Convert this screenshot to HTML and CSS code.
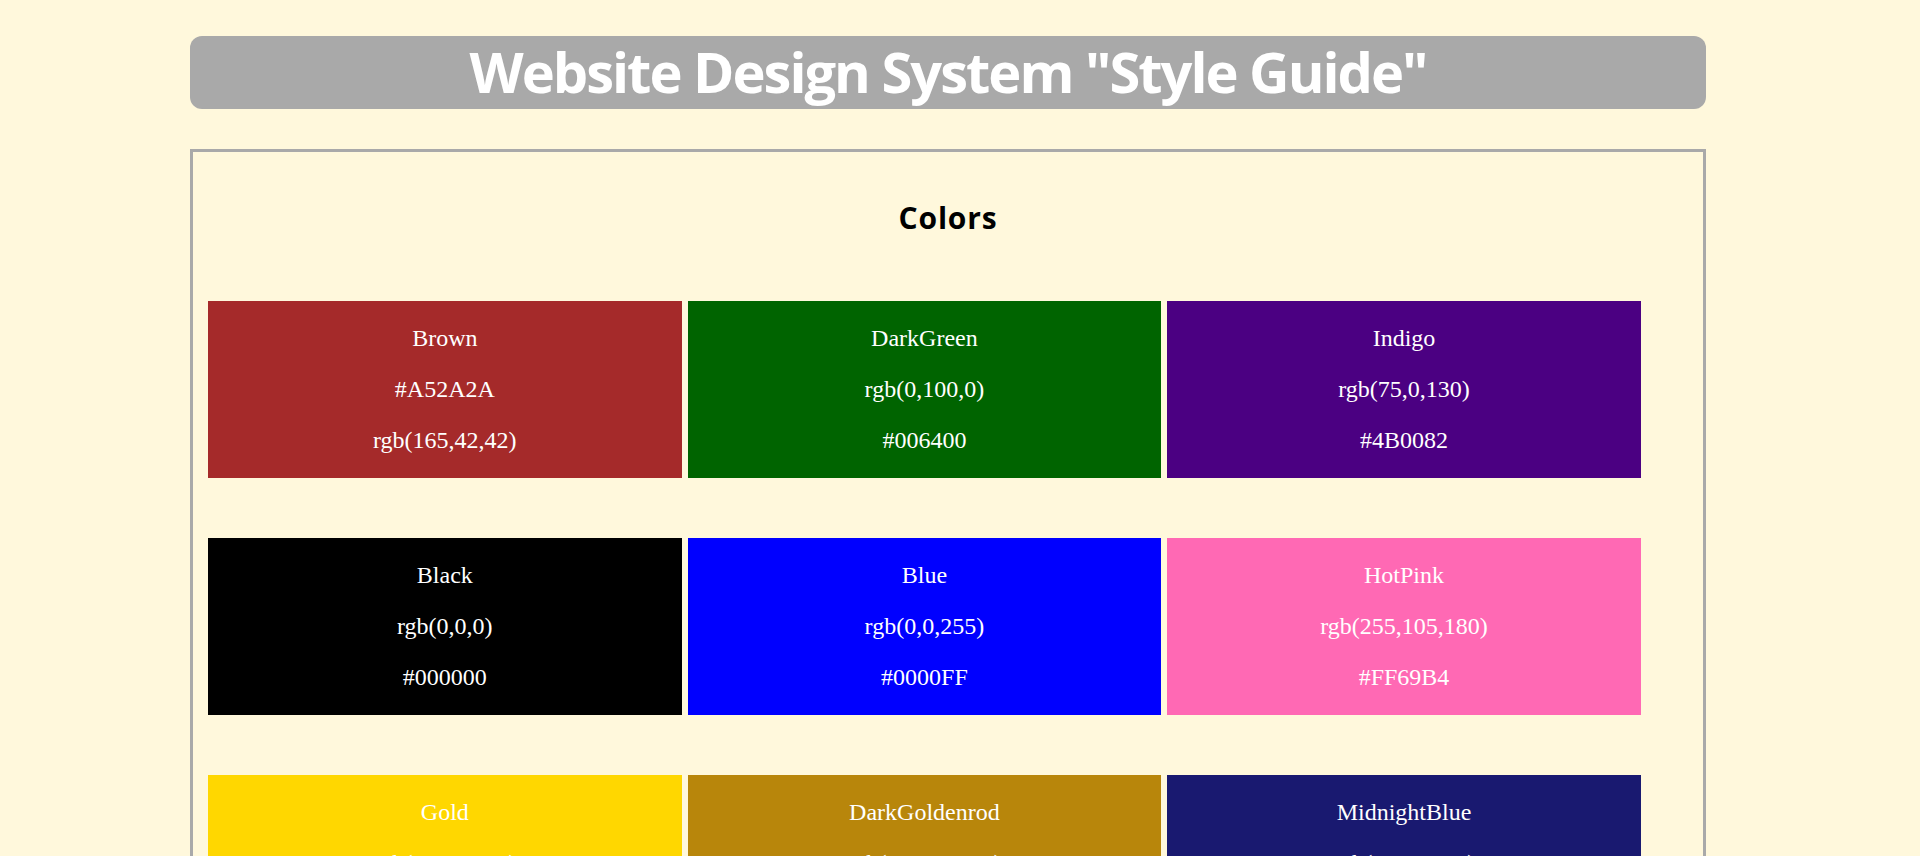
FILE: index.html
```html
<!DOCTYPE html>
<html lang="en">
<head>
<meta charset="utf-8">
<title>Website Design System "Style Guide"</title>
<link rel="stylesheet" href="styles.css">
</head>
<body>
<div class="page">
  <h1 class="banner">Website Design System "Style Guide"</h1>

  <section class="panel">
    <h2 class="section-title">Colors</h2>
    <div class="swatches">
      <div class="swatch c-brown"><p>Brown</p><p>#A52A2A</p><p>rgb(165,42,42)</p></div>
      <div class="swatch c-darkgreen"><p>DarkGreen</p><p>rgb(0,100,0)</p><p>#006400</p></div>
      <div class="swatch c-indigo"><p>Indigo</p><p>rgb(75,0,130)</p><p>#4B0082</p></div>

      <div class="swatch c-black"><p>Black</p><p>rgb(0,0,0)</p><p>#000000</p></div>
      <div class="swatch c-blue"><p>Blue</p><p>rgb(0,0,255)</p><p>#0000FF</p></div>
      <div class="swatch c-hotpink"><p>HotPink</p><p>rgb(255,105,180)</p><p>#FF69B4</p></div>

      <div class="swatch c-gold"><p>Gold</p><p>rgb(255,215,0)</p><p>#FFD700</p></div>
      <div class="swatch c-darkgoldenrod"><p>DarkGoldenrod</p><p>rgb(184,134,11)</p><p>#B8860B</p></div>
      <div class="swatch c-midnightblue"><p>MidnightBlue</p><p>rgb(25,25,112)</p><p>#191970</p></div>

      <div class="swatch c-teal"><p>Teal</p><p>rgb(0,128,128)</p><p>#008080</p></div>
      <div class="swatch c-crimson"><p>Crimson</p><p>rgb(220,20,60)</p><p>#DC143C</p></div>
      <div class="swatch c-slategray"><p>SlateGray</p><p>rgb(112,128,144)</p><p>#708090</p></div>

      <div class="swatch c-darkorange"><p>DarkOrange</p><p>rgb(255,140,0)</p><p>#FF8C00</p></div>
      <div class="swatch c-olivedrab"><p>OliveDrab</p><p>rgb(107,142,35)</p><p>#6B8E23</p></div>
      <div class="swatch c-steelblue"><p>SteelBlue</p><p>rgb(70,130,180)</p><p>#4682B4</p></div>

      <div class="swatch c-tomato"><p>Tomato</p><p>rgb(255,99,71)</p><p>#FF6347</p></div>
      <div class="swatch c-darkslategray"><p>DarkSlateGray</p><p>rgb(47,79,79)</p><p>#2F4F4F</p></div>
      <div class="swatch c-purple"><p>Purple</p><p>rgb(128,0,128)</p><p>#800080</p></div>

      <div class="swatch c-chocolate"><p>Chocolate</p><p>rgb(210,105,30)</p><p>#D2691E</p></div>
      <div class="swatch c-seagreen"><p>SeaGreen</p><p>rgb(46,139,87)</p><p>#2E8B57</p></div>
      <div class="swatch c-royalblue"><p>RoyalBlue</p><p>rgb(65,105,225)</p><p>#4169E1</p></div>

      <div class="swatch c-maroon"><p>Maroon</p><p>rgb(128,0,0)</p><p>#800000</p></div>
      <div class="swatch c-darkcyan"><p>DarkCyan</p><p>rgb(0,139,139)</p><p>#008B8B</p></div>
      <div class="swatch c-darkviolet"><p>DarkViolet</p><p>rgb(148,0,211)</p><p>#9400D3</p></div>
    </div>
  </section>

  <section class="panel">
    <h2 class="section-title">Typography</h2>
    <div class="type-list">
      <p class="type-sample type-h1">Heading 1</p>
      <p class="type-sample type-h2">Heading 2</p>
      <p class="type-sample type-h3">Heading 3</p>
      <p class="type-sample type-body">Body text: The quick brown fox jumps over the lazy dog.</p>
      <p class="type-sample type-small">Small text: The quick brown fox jumps over the lazy dog.</p>
    </div>
  </section>

  <section class="panel">
    <h2 class="section-title">Buttons</h2>
    <div class="button-row">
      <button class="btn btn-primary">Primary</button>
      <button class="btn btn-secondary">Secondary</button>
      <button class="btn btn-disabled">Disabled</button>
    </div>
  </section>
</div>
</body>
</html>
```

FILE: styles.css
```css
html, body {
  margin: 0;
  padding: 0;
}

body {
  background: #FFF8DC;
  font-family: "Liberation Serif", "Times New Roman", serif;
}

/* Browser scrollbar look */
::-webkit-scrollbar {
  width: 24px;
  background: #F1F1F1;
}

::-webkit-scrollbar-track {
  background: #F1F1F1;
}

::-webkit-scrollbar-thumb {
  background: #C1C1C1;
  background-clip: padding-box;
  border-left: 3px solid transparent;
  border-right: 3px solid transparent;
}

::-webkit-scrollbar-button:single-button:vertical:decrement,
::-webkit-scrollbar-button:single-button:vertical:increment {
  display: block;
  height: 17px;
  background-color: #F1F1F1;
  background-repeat: no-repeat;
  background-size: 4px 4px;
}

::-webkit-scrollbar-button:single-button:vertical:decrement {
  background-image:
    linear-gradient(to top left, #505050 50%, transparent 50%),
    linear-gradient(to top right, #505050 50%, transparent 50%);
  background-position: 8px 6px, 12px 6px;
}

::-webkit-scrollbar-button:single-button:vertical:increment {
  background-image:
    linear-gradient(to bottom left, #505050 50%, transparent 50%),
    linear-gradient(to bottom right, #505050 50%, transparent 50%);
  background-position: 8px 7px, 12px 7px;
}

.page {
  width: 1516px;
  margin-left: 190px;
  padding: 36px 0 80px;
}

.banner {
  margin: 0;
  padding: 0 0 2px;
  background: #A9A9A9;
  border-radius: 12px;
  color: #FFFFFF;
  text-align: center;
  font-family: "Open Sans", "Noto Sans", sans-serif;
  font-weight: 700;
  font-size: 56px;
  line-height: 71px;
  letter-spacing: -2px;
}

.panel {
  margin-top: 40px;
  border: 3px solid #A9A9A9;
  padding: 15px;
}

.section-title {
  margin: 32px 0 64px;
  text-align: center;
  font-family: "Open Sans", "Noto Sans", sans-serif;
  font-weight: 700;
  font-size: 30px;
  line-height: 38px;
  letter-spacing: 0.8px;
  color: #000000;
}

.swatches {
  display: grid;
  grid-template-columns: repeat(3, 32%);
  column-gap: 6px;
  row-gap: 60px;
  margin-bottom: 60px;
}

.swatch {
  display: flow-root;
  text-align: center;
  color: #FFFFFF;
}

.swatch p {
  margin: 24px 0;
  font-size: 24px;
  line-height: 27px;
}

.c-brown { background: #A52A2A; }
.c-darkgreen { background: #006400; }
.c-indigo { background: #4B0082; }
.c-black { background: #000000; }
.c-blue { background: #0000FF; }
.c-hotpink { background: #FF69B4; }
.c-gold { background: #FFD700; }
.c-darkgoldenrod { background: #B8860B; }
.c-midnightblue { background: #191970; }
.c-teal { background: #008080; }
.c-crimson { background: #DC143C; }
.c-slategray { background: #708090; }
.c-darkorange { background: #FF8C00; }
.c-olivedrab { background: #6B8E23; }
.c-steelblue { background: #4682B4; }
.c-tomato { background: #FF6347; }
.c-darkslategray { background: #2F4F4F; }
.c-purple { background: #800080; }
.c-chocolate { background: #D2691E; }
.c-seagreen { background: #2E8B57; }
.c-royalblue { background: #4169E1; }
.c-maroon { background: #800000; }
.c-darkcyan { background: #008B8B; }
.c-darkviolet { background: #9400D3; }

.type-list {
  display: flex;
  flex-direction: column;
  gap: 24px;
  padding: 0 24px 60px;
}

.type-sample {
  margin: 0;
}

.type-h1 { font: 700 48px/1.2 "Open Sans", sans-serif; }
.type-h2 { font: 700 36px/1.2 "Open Sans", sans-serif; }
.type-h3 { font: 700 28px/1.2 "Open Sans", sans-serif; }
.type-body { font-size: 24px; }
.type-small { font-size: 18px; }

.button-row {
  display: flex;
  gap: 24px;
  justify-content: center;
  padding-bottom: 60px;
}

.btn {
  font: 700 20px "Open Sans", sans-serif;
  padding: 12px 32px;
  border-radius: 8px;
  border: 2px solid #A9A9A9;
}

.btn-primary { background: #A52A2A; color: #FFFFFF; border-color: #A52A2A; }
.btn-secondary { background: #FFFFFF; color: #A52A2A; }
.btn-disabled { background: #DDDDDD; color: #888888; }
```
